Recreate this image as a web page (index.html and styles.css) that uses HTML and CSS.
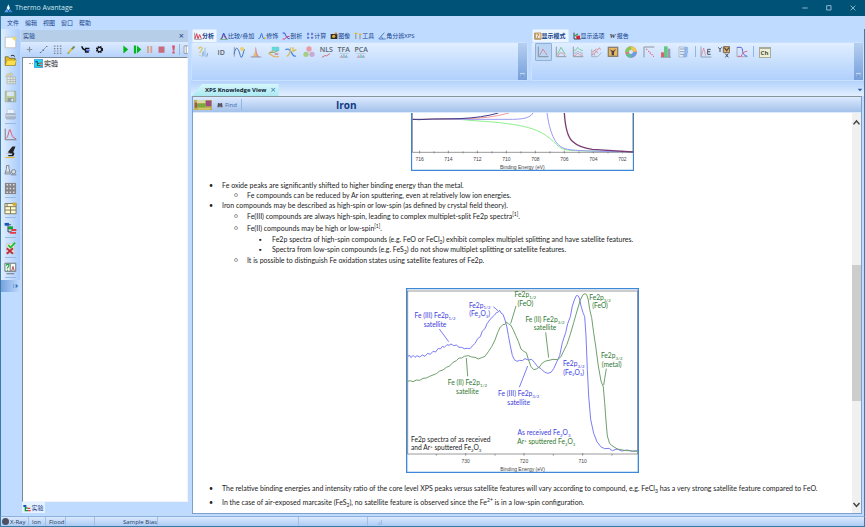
FILE: index.html
```html
<!DOCTYPE html>
<html lang="zh-CN">
<head>
<meta charset="utf-8">
<title>Thermo Avantage</title>
<link rel="stylesheet" href="styles.css">
</head>
<body>
<header class="titlebar">
  <svg class="logo" viewBox="0 0 27 27"><path d="M13 1 18 13 13 19 8 13Z" fill="#e8f6ff"/><path d="M8 14 13 20 11 25H1Z" fill="#5ba6ee"/><path d="M18 14 26 25H13l1-5Z" fill="#3f7fe0"/></svg>
  <span class="app-name">Thermo Avantage</span>
  <div class="window-buttons">
    <button aria-label="Minimize"><svg viewBox="0 0 18 18"><path d="M1 9h16" class="wb"/></svg></button>
    <button aria-label="Maximize"><svg viewBox="0 0 18 18"><path d="M2 2h13v13H2z" class="wb"/></svg></button>
    <button aria-label="Close"><svg viewBox="0 0 18 18"><path d="M2 2l14 14M16 2 2 16" class="wb"/></svg></button>
  </div>
</header>
<nav class="menubar">
  <button>文件</button><button>编辑</button><button>视图</button><button>窗口</button><button>帮助</button>
</nav>
<div class="workspace">
  <aside class="side-tools">
    <button aria-label="New"><svg viewBox="0 0 42 42"><path d="M4 4h34v34H4z" fill="#fff" stroke="#a9a9a4" stroke-width="2"/><circle cx="34" cy="8" r="5" fill="#f4dc5c"/><path d="M34 0v16M26 8h16" stroke="#f2d95a" stroke-width="2"/></svg></button>
    <button aria-label="Open"><svg viewBox="0 0 42 42"><path d="M4 37V9h10l4 5h18v23z" fill="#e8bc1c" stroke="#4b4218" stroke-width="2"/><path d="M4 37l6-17h30l-5 17z" fill="#fbe04e" stroke="#83701c"/><path d="M22 6q8-5 13 2" fill="none" stroke="#222" stroke-width="3"/></svg></button>
    <button aria-label="Export grid"><svg viewBox="0 0 42 42" opacity=".65"><path d="M10 16h27v22H10z" fill="#fffbd0" stroke="#878c78" stroke-width="2"/><path d="M10 24h27M10 31h27M20 16v22M29 16v22" stroke="#878c78" stroke-width="2"/><path d="M5 15Q8 4 21 4V1l9 7-9 7v-5q-8 0-10 5z" fill="#dccd69" stroke="#93916c"/></svg></button>
    <button aria-label="Save"><svg viewBox="0 0 42 42" opacity=".65"><path d="M4 4h34v34H4z" fill="#b4bd5a" stroke="#737b64" stroke-width="2"/><path d="M10 5h22v15H10z" fill="#e4eef3"/><path d="M12 26h19v12H12z" fill="#707a78"/><path d="M24 28h5v8h-5z" fill="#fff"/></svg></button>
    <button aria-label="Print"><svg viewBox="0 0 42 42" opacity=".65"><path d="M12 4h20l3 16H8z" fill="#fff" stroke="#aab3bd" stroke-width="2"/><path d="M4 20l5-4h25l5 4v12l-5 5H9l-5-5z" fill="#9aa2ac"/><path d="M5 25h33" stroke="#e4e8ee" stroke-width="3"/></svg></button>
    <hr>
    <button aria-label="Spectrum"><svg viewBox="0 0 42 42"><path d="M4 2v36h36" fill="none" stroke="#777" stroke-width="3"/><path d="M6 34Q12 32 15 16t5-10 5 16 14 13" fill="none" stroke="#e0556a" stroke-width="3"/></svg></button>
    <button aria-label="Microscope"><svg viewBox="0 0 42 42"><path d="M27 2h10l-7 17 4 6-4 8H14v-4h11l2-5H14v-6z" fill="#222"/><path d="M8 22h11v3H8z" fill="#bbb"/><path d="M4 37h31" stroke="#d9c24c" stroke-width="4"/></svg></button>
    <button aria-label="Sample"><svg viewBox="0 0 42 42"><path d="M8 5h8v10l5 17H3l5-17zM5 26h14" fill="#e5edf4" stroke="#77828d" stroke-width="3"/><circle cx="31" cy="25" r="7" fill="#d4dce3" stroke="#77828d" stroke-width="3"/><path d="M22 35h18" stroke="#77828d" stroke-width="3"/></svg></button>
    <button aria-label="Plate"><svg viewBox="0 0 42 42"><path d="M3 3h36v36H3z" fill="#84848a"/><path d="M8 9h5m5 0h5m6 0h5M8 21h5m5 0h5m6 0h5M8 33h5m5 0h5m6 0h5" stroke="#deded7" stroke-width="5"/></svg></button>
    <hr>
    <button aria-label="Table"><svg viewBox="0 0 42 42"><path d="M3 5h36v33H3z" fill="#fffcc7" stroke="#777462" stroke-width="3"/><path d="M3 15h36M3 26h36M21 15v23M10 5v10" stroke="#777462" stroke-width="3"/><path d="M28 2h12v10H28z" fill="#d2a72d"/></svg></button>
    <hr>
    <button aria-label="Experiment tree"><svg viewBox="0 0 42 42"><path d="M2 3h14v9H2z" fill="#1556c3"/><path d="M16 9h6M13 12v20h12M13 20h9" fill="none" stroke="#333" stroke-width="3"/><path d="M14 14h15v10H14z" fill="#14a43c"/><path d="M24 23h16v6H24zM19 32h20v6H19z" fill="#e63845"/></svg></button>
    <hr>
    <button aria-label="Validate"><svg viewBox="0 0 42 42"><path d="M8 5h25v32H8z" fill="#e7e5d8" stroke="#a8a79d"/><path d="M9 20l20 18M29 20 9 38" stroke="#bb3142" stroke-width="6"/><path d="M14 10l7 8L36 2" fill="none" stroke="#19bf2d" stroke-width="5"/></svg></button>
    <hr>
    <button aria-label="Knowledge"><svg viewBox="0 0 42 42"><path d="M3 4h35v26H3z" fill="#f5fbf5" stroke="#666e75" stroke-width="3"/><path d="M8 38h25M20 5v25" stroke="#666e75" stroke-width="3"/><path d="M8 12q0-5 4-5 6 1 3 7l-4 5v2m0 4v3" fill="none" stroke="#21aa46" stroke-width="4"/><path d="M25 29l4-15 4 15" fill="none" stroke="#b34d58" stroke-width="3"/></svg></button>
    <hr>
    <button class="expand" aria-label="Expand"><svg viewBox="0 0 24 18"><path d="M5 3v12" stroke="#5c8cc9" stroke-width="2"/><path d="M11 2l8 7-8 7z" fill="#3e75c1"/></svg></button>
  </aside>

  <section class="experiment">
    <div class="panel-head"><span>实验</span><button aria-label="Close panel">×</button></div>
    <div class="panel-tools">
      <button aria-label="Point"><svg viewBox="0 0 30 30"><path d="M15 6v18M6 15h18" stroke="#8b929c" stroke-width="4"/></svg></button>
      <button aria-label="Line"><svg viewBox="0 0 30 30"><path d="M4 27 26 4" stroke="#767b84" stroke-width="2"/><path d="M3 25h4m5-8h5m7-12h4" stroke="#686c74" stroke-width="4"/></svg></button>
      <button aria-label="Grid"><svg viewBox="0 0 30 30"><path d="M3 4h5m5 0h5m5 0h5M3 12h5m5 0h5m5 0h5M3 20h5m5 0h5m5 0h5M3 28h5m5 0h5m5 0h5" stroke="#7b8490" stroke-width="4"/></svg></button>
      <button aria-label="Edit"><svg viewBox="0 0 30 30"><path d="M5 26 17 12" stroke="#e0bd3c" stroke-width="6"/><path d="M16 14 25 5" stroke="#718a5a" stroke-width="6"/><path d="M2 28l4-1" stroke="#43a34a" stroke-width="4"/></svg></button>
      <button aria-label="Gun"><svg viewBox="0 0 30 30"><path d="M3 4q1 10 11 13" fill="none" stroke="#111" stroke-width="5"/><path d="M13 9h15v5H17v4h9v8H13z" fill="#151525"/><path d="M18 16h11v5H18z" fill="#506eec"/></svg></button>
      <button aria-label="Settings"><svg viewBox="0 0 30 30"><circle cx="15" cy="15" r="10" fill="none" stroke="#16181b" stroke-width="4" stroke-dasharray="5 3"/><circle cx="15" cy="15" r="7" fill="none" stroke="#16181b" stroke-width="4"/></svg></button>
      <span class="gap"></span>
      <button aria-label="Run"><svg viewBox="0 0 30 30"><path d="M8 2l16 13L8 28z" fill="#05b51d"/></svg></button>
      <button aria-label="Run step"><svg viewBox="0 0 30 30"><path d="M3 2h7v26H3zM13 2l15 13-15 13z" fill="#05b51d"/></svg></button>
      <button aria-label="Pause"><svg viewBox="0 0 30 30"><path d="M7 3h6v24H7zM18 3h6v24h-6z" fill="#d9a287"/></svg></button>
      <button aria-label="Stop"><svg viewBox="0 0 30 30"><path d="M5 5h20v21H5z" fill="#c96b7c"/></svg></button>
      <button aria-label="Abort"><svg viewBox="0 0 30 30"><path d="M10 2h10l-2 17h-5z" fill="#d75769"/><circle cx="15" cy="25" r="4" fill="#d75769"/></svg></button>
      <i class="divider"></i>
      <button class="cut" aria-label="Report"><svg viewBox="0 0 30 30"><path d="M7 3h22v25H7zM14 3v25" fill="#fff" stroke="#68717b" stroke-width="2"/></svg></button>
    </div>
    <div class="tree">
      <div class="tree-item"><i class="twig"></i><svg viewBox="0 0 26 26"><path d="M1 1h24v24H1z" fill="#20d6eb" stroke="#2384dd" stroke-width="2"/><path d="M4 6h7v4H4z" fill="#124cc3"/><path d="M10 8v11h7M10 13h6" fill="none" stroke="#156d46" stroke-width="3"/><path d="M16 10h7v4h-7zM16 18h7v4h-7z" fill="#e34755"/></svg><span>实验</span></div>
    </div>
    <div class="panel-tabs"><button><svg viewBox="0 0 24 24"><path d="M1 3h9v6H1z" fill="#1754c5"/><path d="M7 9v11h8M7 12h7" fill="none" stroke="#17913c" stroke-width="4"/><path d="M14 11h8v4h-8zM15 18h8v4h-8z" fill="#e33d42"/></svg>实验</button></div>
  </section>

  <section class="right">
    <div class="ribbons">
      <div class="ribbon analysis">
        <div class="tabs">
          <button class="active"><svg viewBox="0 0 24 24"><path d="M2 2v20h21" fill="none" stroke="#777" stroke-width="2"/><path d="M3 20 8 5l4 15 5-12 5 12" fill="none" stroke="#e03648" stroke-width="3"/></svg>分析</button>
          <button><svg viewBox="0 0 24 24"><path d="M1 21Q7 21 9 11t4 0 9 10" fill="none" stroke="#e43b3f" stroke-width="3"/><path d="M5 20 11 3l8 17" fill="none" stroke="#335bd8" stroke-width="3"/><path d="M1 23h22" stroke="#2eaa47" stroke-width="2"/></svg>比较/叠加</button>
          <button><svg viewBox="0 0 24 24"><path d="M1 20q7 1 8-12 2-10 4 4 1 9 8 9" fill="none" stroke="#4278dc" stroke-width="3"/><path d="M18 16h5v5h-5z" fill="#e7b936"/></svg>修饰</button>
          <button><svg viewBox="0 0 24 24"><path d="M2 3h6q6 18 15 17" fill="none" stroke="#3549d6" stroke-width="3"/><path d="M2 21h6q7-10 15-8" fill="none" stroke="#df4370" stroke-width="3"/></svg>剖析</button>
          <button><svg viewBox="0 0 24 24"><path d="M3 6h7m5 0h7M3 17h7m5 0h7M6 2v8m12-8v8M6 14v7m12-7v7" stroke="#5267cb" stroke-width="3"/></svg>计算</button>
          <button><svg viewBox="0 0 24 24"><path d="M2 6h20v15H2z" fill="#322b2e"/><circle cx="11" cy="13" r="5" fill="#dfac36"/><path d="M14 2h7v5h-7z" fill="#d67c2e"/></svg>图像</button>
          <button><svg viewBox="0 0 24 24"><path d="M5 3v18M18 7v15" stroke="#9ca4a7" stroke-width="4"/><path d="M2 4h8m5 3h8" stroke="#e4b52e" stroke-width="4"/></svg>工具</button>
          <button><svg viewBox="0 0 24 24"><path d="M2 21 19 2M3 21h20M9 14q5 2 5 7" fill="none" stroke="#547dbd" stroke-width="3"/></svg>角分辨XPS</button>
        </div>
        <div class="ribbon-body">
          <div class="tool-grid ten">
            <button aria-label="Identify"><svg viewBox="0 0 36 36"><path d="M2 9q2-7 8-5 5 4 0 9l-4 5v4m0 5v3" fill="none" stroke="#ddc56e" stroke-width="4"/><path d="M14 31V18m7 13V5m7 27V21m-16 11q5 0 5-16m5 17q6-2 7-12" fill="none" stroke="#78a4d5" stroke-width="2"/></svg></button>
            <button class="word id">ID</button>
            <button aria-label="Peak"><svg viewBox="0 0 36 36"><path d="M4 3v29" stroke="#767b8b" stroke-width="2"/><path d="M3 25Q8 2 13 7t9 22T34 9" fill="none" stroke="#4e79bf" stroke-width="3"/><circle cx="27" cy="9" r="6" fill="#ecd06d"/></svg></button>
            <button aria-label="Fit"><svg viewBox="0 0 36 36"><path d="M3 33q12-2 14-29 4 28 15 29z" fill="#e9a7ae"/><path d="M8 33q5-2 8-20l7 20z" fill="#dfc16e"/><path d="M17 4q1 20 6 29" stroke="#d97583" stroke-width="2" fill="none"/><path d="M2 33h32" stroke="#6b83ba" stroke-width="2"/></svg></button>
            <button aria-label="Link"><svg viewBox="0 0 36 36"><path d="M12 3h21v12H12z" fill="#5edce2" stroke="#7dbca9"/><path d="M16 14 3 23l15 9h15" fill="none" stroke="#e5b36b" stroke-width="4"/><path d="M4 19h15l10-5" stroke="#77a872" stroke-width="3" fill="none"/><path d="M20 24h11" stroke="#cc7585" stroke-width="4"/></svg></button>
            <button aria-label="Smooth"><svg viewBox="0 0 36 36"><path d="M1 11q11-6 18 8t14 11" fill="none" stroke="#4c8ce5" stroke-width="4"/><path d="M5 31Q16 27 17 4m8 12 9-6M24 4v13" fill="none" stroke="#dabe5d" stroke-width="4"/></svg></button>
            <button aria-label="Composition"><svg viewBox="0 0 36 36"><circle cx="18" cy="9" r="8" fill="#ea9ba7"/><circle cx="9" cy="25" r="8" fill="#a8cc85"/><circle cx="27" cy="25" r="8" fill="#c8abd4"/></svg></button>
            <button class="word">NLS<svg viewBox="0 0 30 16"><path d="M2 14 12 8 17 9 28 2" fill="none" stroke="#d16b6e" stroke-width="3"/></svg></button>
            <button class="word">TFA<svg viewBox="0 0 30 16"><path d="M3 14q5-15 8 0" fill="#e394a2"/><path d="M10 14q5-22 9 0" fill="#79d4c7"/><path d="M18 14q5-15 8 0" fill="#99a4df"/><path d="M1 2h28M1 14h28" stroke="#888"/></svg></button>
            <button class="word">PCA<svg viewBox="0 0 30 16"><path d="M3 14q5-15 8 0" fill="#e394a2"/><path d="M10 14q5-22 9 0" fill="#79d4c7"/><path d="M18 14q5-15 8 0" fill="#99a4df"/><path d="M1 2h28M1 14h28" stroke="#888"/></svg></button>
          </div>
          <button class="launcher" aria-label="More"><svg viewBox="0 0 20 20"><path d="M3 4h14" stroke="#e7f2ff" stroke-width="2"/><path d="M3 9h14l-7 8z" fill="#5688ca" stroke="#dcecff"/></svg></button>
        </div>
      </div>
      <div class="ribbon display">
        <div class="tabs">
          <button class="active"><svg viewBox="0 0 24 24"><path d="M2 2v20h20M4 3h17v16H4z" fill="#ffe3a0" stroke="#967038" stroke-width="2"/><path d="M8 8q3-5 6 0 0 3-4 6v3" fill="none" stroke="#7c4f24" stroke-width="2"/></svg>显示模式</button>
          <button><svg viewBox="0 0 24 24"><path d="M3 2v19h20" fill="none" stroke="#444" stroke-width="3"/><path d="M4 13 15 5" stroke="#31a159" stroke-width="4"/><path d="M10 11h11v10H10z" fill="#cb2430"/></svg>显示选项</button>
          <button><b class="w-mark">W</b>报告</button>
        </div>
        <div class="ribbon-body">
          <div class="tool-grid nine">
            <button class="pressed" aria-label="Single"><svg viewBox="0 0 36 36"><path d="M4 2v30h30" fill="none" stroke="#8590a1" stroke-width="3"/><path d="M8 28 18 9l12 19" fill="none" stroke="#d28d9d" stroke-width="3"/></svg></button>
            <button aria-label="Overlay"><svg viewBox="0 0 36 36"><path d="M4 2v30h30" fill="none" stroke="#939ba5" stroke-width="3"/><path d="M7 25 18 4l13 21" fill="none" stroke="#78c69b" stroke-width="3"/><path d="M8 30q10-20 22 0" fill="none" stroke="#dc929f" stroke-width="3"/></svg></button>
            <button aria-label="Stack"><svg viewBox="0 0 36 36"><path d="M4 2v30h30" fill="none" stroke="#939ba5" stroke-width="3"/><path d="M5 14q8 0 12-10 5 9 16 10" fill="none" stroke="#84cda0" stroke-width="3"/><path d="M5 22q8 0 12-7 5 7 16 7" fill="none" stroke="#99a0b4" stroke-width="2"/><path d="M5 29q8 0 12-8 5 8 16 7" fill="none" stroke="#e09aa4" stroke-width="3"/></svg></button>
            <button aria-label="Perspective"><svg viewBox="0 0 36 36"><path d="M5 10v22h18L34 20" fill="none" stroke="#999da4" stroke-width="2"/><path d="M6 28q5-12 8 0m0-6q6-13 8-1m0-8q7-13 9-2M7 18l13-9" fill="none" stroke="#d9878c" stroke-width="3"/></svg></button>
            <button aria-label="Image"><svg viewBox="0 0 36 36"><path d="M2 2h32v31H2z" fill="#8b8170"/><path d="M6 6h24v23H6z" fill="#ecb55f"/><path d="M8 10l10 5 9-7-6 11v9h-7V18z" fill="#454747"/></svg></button>
            <button aria-label="Colour wheel"><svg viewBox="0 0 36 36"><circle cx="18" cy="18" r="12" fill="none" stroke="#e17580" stroke-width="11"/><path d="M6 18A12 12 0 0 1 18 6" fill="none" stroke="#85cb58" stroke-width="11"/><path d="M18 6a12 12 0 0 1 12 11" fill="none" stroke="#ebc850" stroke-width="11"/><path d="M30 18a12 12 0 0 1-12 12" fill="none" stroke="#6b9ce1" stroke-width="11"/><path d="M18 30A12 12 0 0 1 7 23" fill="none" stroke="#65bd96" stroke-width="11"/></svg></button>
            <button aria-label="Scatter"><svg viewBox="0 0 36 36"><path d="M3 34V3h31" fill="none" stroke="#8c949e" stroke-width="3"/><path d="M9 10h4m2 6h4m1 5h4m1 5h4m1 5h3" stroke="#e47786" stroke-width="4"/></svg></button>
            <button aria-label="Bars"><svg viewBox="0 0 36 36"><path d="M3 19h9v14H3z" fill="#e0606f"/><path d="M12 1h11v32H12z" fill="#62ca80"/><path d="M23 8h8v25h-8z" fill="#9b9cb8"/><path d="M2 34h31" stroke="#7a8491" stroke-width="2"/></svg></button>
            <button aria-label="Sheets"><svg viewBox="0 0 36 36"><path d="M3 3h20v30H3z" fill="#e5eefb" stroke="#9ba9bc" stroke-width="2"/><path d="M6 9h14M6 17h14M6 25h14" stroke="#91a2bb" stroke-width="3"/><path d="M20 4h9v8h-9zM20 14h9v8h-9zM16 24h11v8H16z" fill="#94b9ed" stroke="#6194dc"/></svg></button>
          </div>
          <i class="divider"></i>
          <div class="tool-grid three">
            <button aria-label="Energy"><svg viewBox="0 0 36 36"><path d="M3 2v31h31" fill="none" stroke="#777f8b" stroke-width="2"/><path d="M4 29 11 6l6 23" fill="none" stroke="#df7384" stroke-width="2"/><path d="M32 10h-9v15h9M23 17h8" fill="none" stroke="#4d5862" stroke-width="3"/></svg></button>
            <button aria-label="YX image"><svg viewBox="0 0 36 36"><path d="M16 2h19v18H16z" fill="#e8b060" stroke="#70695e" stroke-width="3"/><path d="M19 5l7 9 7-9" fill="none" stroke="#554e47" stroke-width="4"/><path d="M1 4l5 6 5-6M6 10v8m16 5 9 11m0-11-9 11" fill="none" stroke="#474b51" stroke-width="3"/></svg></button>
            <button aria-label="Profile"><svg viewBox="0 0 36 36"><path d="M3 3v29h31" fill="none" stroke="#8b91a0" stroke-width="2"/><path d="M3 4h12q5 1 5 12t14 15" fill="none" stroke="#5667d9" stroke-width="3"/><path d="M5 31h11q3-15 18-15" fill="none" stroke="#e26b87" stroke-width="3"/></svg></button>
          </div>
          <i class="divider"></i>
          <button class="chem">Ch</button>
          <button class="launcher" aria-label="More"><svg viewBox="0 0 20 20"><path d="M3 4h14" stroke="#e7f2ff" stroke-width="2"/><path d="M3 9h14l-7 8z" fill="#5688ca" stroke="#dcecff"/></svg></button>
        </div>
      </div>
    </div>

    <div class="doc-tabs">
      <button class="doc-tab"><b>XPS Knowledge View</b><span>×</span></button>
      <button class="doc-menu" aria-label="Documents"><svg viewBox="0 0 18 12"><path d="M2 2h14l-7 8z" fill="#2763aa"/></svg></button>
    </div>
    <div class="doc">
      <div class="doc-bar">
        <button class="map" aria-label="Periodic table"><svg viewBox="0 0 54 30"><path d="M0 0h54v30H0z" fill="#bcae55"/><path d="M2 8h7v15H2z" fill="#a35855"/><path d="M9 11h25v11H9z" fill="#77aa3d"/><path d="M35 2h17v17H35z" fill="#974d81"/><path d="M9 0h25v9H9z" fill="#d8d9aa"/><path d="M12 25h36v3H12z" fill="#ded573"/></svg></button>
        <button class="find"><svg viewBox="0 0 18 18"><path d="M3 3h4l2 4 2-4h4l2 13h-7v-5H8v5H1z" fill="#54545a"/></svg>Find</button>
        <i class="divider"></i>
        <h1>Iron</h1>
      </div>
      <div class="doc-view">
        <article class="page">
          <svg class="chart-top" viewBox="36 9 669 174">
            <path d="M37.500 9V181.500H703.500V9" fill="#fff" stroke="#3d89d8" stroke-width="4"/>
            <path d="M40 127H702M62 122v8M105 124v6M148 122v8M192 124v6M235 122v8M279 124v6M322 122v8M366 124v6M409 122v8M453 124v6M496 122v8M540 124v6M583 122v8M627 124v6M670 122v8M40 9v118M702 9v118" class="axis"/>
            <path d="M40 28 180 28C230 34 290 34 340 43C390 50 420 62 440 76C458 88 470 102 482 112Q496 122 530 122L702 126" class="line lime"/>
            <path d="M40 28 340 28Q375 28 390 20 398 16 402 9M444 9C450 50 458 75 470 95Q484 114 505 118 540 124 702 126" class="line violet"/>
            <path d="M40 28 190 26Q270 26 330 9" class="line coral"/>
            <path d="M40 28 60 29 100 27 180 26Q250 23 298 9" class="line navy"/>
            <path d="M496 9Q500 75 520 94 540 113 580 118L702 126" class="line purple"/>
            <g class="tick"><text x="62" y="152">716</text><text x="148" y="152">714</text><text x="235" y="152">712</text><text x="322" y="152">710</text><text x="409" y="152">708</text><text x="496" y="152">706</text><text x="583" y="152">704</text><text x="670" y="152">702</text><text x="370" y="177">Binding Energy (eV)</text></g>
          </svg>
          <ul class="notes">
            <li>Fe oxide peaks are significantly shifted to higher binding energy than the metal.
              <ul><li>Fe compounds can be reduced by Ar ion sputtering, even at relatively low ion energies.</li></ul></li>
            <li>Iron compounds may be described as high-spin or low-spin (as defined by crystal field theory).
              <ul>
                <li class="roomy">Fe(III) compounds are always high-spin, leading to complex multiplet-split Fe2p spectra<sup>[1]</sup>.</li>
                <li class="roomy">Fe(II) compounds may be high or low-spin<sup>[1]</sup>.
                  <ul><li>Fe2p spectra of high-spin compounds (e.g. FeO or FeCl<sub>2</sub>) exhibit complex multiplet splitting and have satellite features.</li><li>Spectra from low-spin compounds (e.g. FeS<sub>2</sub>) do not show multiplet splitting or satellite features.</li></ul></li>
                <li class="roomy">It is possible to distinguish Fe oxidation states using satellite features of Fe2p.</li>
              </ul></li>
          </ul>
          <svg class="chart-main" viewBox="21 26 699 555">
            <path d="M23 28H718V579H23Z" fill="#fff" stroke="#3d89d8" stroke-width="4"/>
            <path d="M26 35H716V524H26ZM112 524v5M200 521v8M288 524v5M375 521v8M463 524v5M551 521v8M639 524v5" class="axis"/>
            <path d="M26 233 31 227 36 235 42 228 48 234 54 229 62 233 70 227 78 231 86 222 94 225 102 216 110 218 118 207 124 209 130 201 136 204 144 196 150 198 156 194 164 199 172 197 180 204 188 204 196 208 205 207 213 208 220 200 228 192 236 178 244 172 250 155 258 148 264 133 272 122 280 113 286 108 292 100 298 98 302 93 306 101 312 105 318 122 323 140 328 168 334 200 340 228 346 241 354 246 362 243 370 244 378 238 388 242 398 240 406 249 416 262 426 268 436 278 446 282 456 279 464 268 474 246 482 229 490 190 500 160 506 133 514 112 520 80 526 62 532 49 536 48 541 56 546 80 552 100 557 112 561 170 565 270 569 350 575 420 584 462 594 487 605 502 617 508 630 507 640 514 655 509 668 515 685 512 700 516 716 514" class="line blue"/>
            <path d="M26 306 34 304 42 307 52 302 62 303 72 297 82 296 92 291 102 287 112 283 122 275 132 272 142 264 152 260 162 249 172 244 180 236 188 236 196 231 208 229 218 233 228 234 238 239 248 235 258 231 268 217 278 202 288 182 296 160 304 143 312 136 318 135 322 128 328 133 335 137 342 150 350 168 358 186 366 209 374 216 382 220 388 240 396 262 404 271 412 269 420 264 430 251 440 245 450 243 462 240 476 241 486 232 494 215 504 195 514 165 524 130 534 95 544 62 552 46 558 43 563 46 568 62 572 90 578 115 584 160 590 200 598 260 606 305 613 323 617 370 621 425 625 470 632 493 642 501 655 509 675 513 716 516" class="line green"/>
            <path d="M121 149l28 38M283 82l15 13M361 324l25-64" class="line blue"/>
            <path d="M202 236l4 55M351 80 335 133M440 159l9 76M622 268l-8 49" class="line green"/>
            <g class="label blue-text">
              <text x="108" y="117">Fe (III) Fe2p<tspan class="small" dy="5">1/2</tspan></text><text x="108" y="142">satellite</text>
              <text x="242" y="85">Fe2p<tspan class="small" dy="5">1/2</tspan></text><text x="242" y="110">(Fe<tspan class="small" dy="5">2</tspan><tspan dy="-5">O</tspan><tspan class="small" dy="5">3</tspan><tspan dy="-5">)</tspan></text>
              <text x="359" y="350">Fe (III) Fe2p<tspan class="small" dy="5">3/2</tspan></text><text x="359" y="376">satellite</text>
              <text x="524" y="260">Fe2p<tspan class="small" dy="5">3/2</tspan></text><text x="524" y="286">(Fe<tspan class="small" dy="5">2</tspan><tspan dy="-5">O</tspan><tspan class="small" dy="5">3</tspan><tspan dy="-5">)</tspan></text>
              <text x="435" y="467">As received Fe<tspan class="small" dy="5">2</tspan><tspan dy="-5">O</tspan><tspan class="small" dy="5">3</tspan></text>
            </g>
            <g class="label green-text">
              <text x="379" y="54">Fe2p<tspan class="small" dy="5">1/2</tspan></text><text x="379" y="79">(FeO)</text>
              <text x="438" y="128">Fe (II) Fe2p<tspan class="small" dy="5">3/2</tspan></text><text x="438" y="153">satellite</text>
              <text x="603" y="62">Fe2p<tspan class="small" dy="5">3/2</tspan></text><text x="603" y="87">(FeO)</text>
              <text x="638" y="237">Fe2p<tspan class="small" dy="5">3/2</tspan></text><text x="638" y="262">(metal)</text>
              <text x="205" y="318">Fe (II) Fe2p<tspan class="small" dy="5">1/2</tspan></text><text x="205" y="343">satellite</text>
              <text x="442" y="494">Ar<tspan class="small" dy="-6">+</tspan><tspan dy="6"> sputtered Fe</tspan><tspan class="small" dy="5">2</tspan><tspan dy="-5">O</tspan><tspan class="small" dy="5">3</tspan></text>
            </g>
            <g class="caption"><text x="36" y="487">Fe2p spectra of as received</text><text x="36" y="512">and Ar<tspan class="small" dy="-6">+</tspan><tspan dy="6"> sputtered Fe</tspan><tspan class="small" dy="5">2</tspan><tspan dy="-5">O</tspan><tspan class="small" dy="5">3</tspan></text></g>
            <g class="tick"><text x="200" y="550">730</text><text x="375" y="550">720</text><text x="551" y="550">710</text><text x="371" y="575">Binding Energy (eV)</text></g>
          </svg>
          <ul class="notes remarks">
            <li>The relative binding energies and intensity ratio of the core level XPS peaks <em>versus</em> satellite features will vary according to compound, e.g. FeCl<sub>3</sub> has a very strong satellite feature compared to FeO.</li>
            <li>In the case of air-exposed marcasite (FeS<sub>2</sub>), no satellite feature is observed since the Fe<sup>2+</sup> is in a low-spin configuration.</li>
          </ul>
        </article>
        <div class="scrollbar">
          <button aria-label="Scroll up"><svg viewBox="0 0 24 24"><path d="M4 17l8-9 8 9" class="arrow"/></svg></button>
          <div class="before"></div><div class="thumb"></div><div class="after"></div>
          <button aria-label="Scroll down"><svg viewBox="0 0 24 24"><path d="M4 8l8 9 8-9" class="arrow"/></svg></button>
        </div>
      </div>
    </div>
  </section>
</div>
<footer class="status">
  <span class="xray"><i class="lamp"></i>X-Ray</span><span class="ion">Ion</span><span class="flood">Flood</span><span class="blank"></span><span class="bias">Sample Bias</span><span class="wide"></span><span class="mid"></span>
  <svg class="grip" viewBox="0 0 18 18"><path d="M3 15h2m3 0h2m3 0h2M8 10h2m3 0h2M13 5h2" stroke="#7796c0" stroke-width="3"/></svg>
</footer>
</body>
</html>
```
FILE: styles.css
```css
* { box-sizing: border-box; }
html, body { height: 100%; margin: 0; }
body {
  display: flex;
  flex-direction: column;
  overflow: hidden;
  background: #bfdbff;
  color: #15428b;
  font: 6px/8px "Open Sans", "Noto Sans CJK SC", sans-serif;
}
button {
  display: flex;
  align-items: center;
  justify-content: center;
  margin: 0;
  padding: 0;
  border: 0;
  background: none;
  color: inherit;
  font: inherit;
  white-space: nowrap;
}
svg { display: block; flex: none; }

.titlebar { display: flex; align-items: center; flex: none; height: 16px; padding-left: 4px; background: #005277; color: #d5e8f1; font-size: 7px; }
.logo { width: 9px; height: 9px; margin-right: 2px; }
.window-buttons { display: flex; margin-left: auto; }
.window-buttons button { width: 24px; height: 16px; }
.window-buttons svg { width: 6px; height: 6px; }
.wb { fill: none; stroke: #d5e8f1; stroke-width: 2; }

.menubar { display: flex; align-items: center; gap: 6px; flex: none; height: 13px; padding-left: 6px; border-left: 1px solid #3a7ca8; }

.workspace { display: flex; flex: 1; min-height: 0; border-left: 1px solid #3a7ca8; border-right: 1px solid #3a7ca8; }
.side-tools { flex: none; width: 19px; padding-top: 4px; background: linear-gradient(90deg, #e1eeff, #a9cbfa); border-radius: 0 3px 0 0; align-self: flex-start; }
.side-tools button { width: 18px; height: 18px; }
.side-tools svg { width: 13px; height: 13px; }
.side-tools hr { width: 11px; height: 1px; margin: 0 auto 1px 4px; border: 0; background: #96b9e6; }
.side-tools .expand { justify-content: flex-end; width: 19px; height: 12px; margin-top: 2px; background: linear-gradient(90deg, #75a2de, #c0dafc); }
.side-tools .expand svg { width: 8px; height: 6px; }

.experiment { display: flex; flex-direction: column; flex: 0 0 167px; min-width: 0; margin-left: 1px; }
.panel-head { display: flex; align-items: center; justify-content: space-between; height: 12px; margin-top: 1px; padding: 0 4px 0 2px; background: #b7cee9; }
.panel-head button { font-size: 9px; }
.panel-tools { display: flex; align-items: center; height: 15px; overflow: hidden; padding-left: 1px; background: linear-gradient(#dceaff, #b6d3fb); }
.panel-tools button { flex: none; width: 14px; height: 14px; }
.panel-tools .gap ~ button { width: 12px; }
.panel-tools svg { width: 9px; height: 9px; }
.panel-tools .cut { flex: 0 1 8px; justify-content: flex-start; margin-left: 2px; overflow: hidden; }
.gap { flex: none; width: 13px; }
.divider { flex: none; width: 1px; height: 11px; background: #93b7e5; }
.tree { flex: 1; min-height: 0; margin-left: 1px; padding: 1px 0 0 6px; border: 1px solid; border-color: #798693 #f0f5fb #f0f5fb #798693; background: #fff; color: #222; font-size: 7px; }
.tree-item { display: flex; align-items: center; gap: 1px; height: 9px; }
.tree-item svg { width: 9px; height: 9px; }
.tree-item span { background: #f0f0f0; }
.twig { width: 4px; border-top: 1px dotted #aaa; }
.panel-tabs { display: flex; flex: none; height: 14px; align-items: flex-start; }
.panel-tabs button { width: 23px; height: 11px; margin-left: 1px; background: #e6f1ff; }
.panel-tabs svg { width: 8px; height: 8px; }

.right { display: flex; flex-direction: column; flex: 1; min-width: 0; margin-left: 3px; }
.ribbons { display: flex; gap: 3px; flex: none; }
.ribbon { min-width: 0; }
.analysis { flex: 336; }
.display { flex: 333; }
.tabs { display: flex; height: 13px; gap: 2px; padding-left: 1px; }
.tabs button { height: 13px; padding: 0 1px; }
.tabs svg { width: 8px; height: 8px; }
.tabs .active { padding: 0 2px 0 1px; border: 1px solid #d9eaff; border-bottom: 0; border-radius: 2px 2px 0 0; background: #edf5ff; font-weight: bold; }
.display .tabs { gap: 3px; }
.w-mark { margin-right: 1px; font: italic bold 7px/8px "Liberation Serif", serif; color: #333; }
.ribbon-body { display: flex; align-items: flex-start; height: 39px; border: 1px solid #c9e0ff; border-radius: 2px; background: linear-gradient(#e0eeff, #b0d0fc); padding-left: 3px; }
.tool-grid { display: grid; height: 18px; align-items: center; }
.ten { grid-template-columns: repeat(10, 1fr); width: 175px; }
.nine { grid-template-columns: repeat(9, 1fr); width: 158px; }
.three { grid-template-columns: repeat(3, 1fr); width: 53px; }
.tool-grid svg { width: 12px; height: 12px; }
.tool-grid button { height: 18px; }
.tool-grid .pressed { border: 1px solid #91b0d8; border-radius: 1px; background: #bbd5f5; }
.tool-grid .word { flex-direction: column; color: #59636e; font-size: 7px; font-weight: 600; line-height: 7px; }
.tool-grid .word svg { width: 10px; height: 5px; }
.ribbon-body > .divider { margin: 3px 2px 0 2px; }
.chem { width: 12px; height: 11px; margin: 4px 0 0 3px; border: 1px solid #aaa99d; border-top-width: 2px; background: #eeeed0; color: #454a46; font-weight: bold; }
.launcher { align-items: flex-end; align-self: stretch; width: 9px; margin-left: auto; padding-bottom: 1px; background: linear-gradient(#b5cff1, #769fda); }
.launcher svg { width: 7px; height: 7px; }

.doc-tabs { display: flex; flex: none; align-items: flex-end; height: 15px; padding-left: 1px; background: linear-gradient(#b3d2fb, #e2efff); }
.doc-tab { gap: 4px; height: 12px; padding: 0 3px 0 13px; background: linear-gradient(#d5f7fa, #ace9f2); clip-path: polygon(10px 0, 100% 0, 100% 100%, 0 100%); color: #102334; }
.doc-tab span { color: #397ca2; font-size: 9px; }
.doc-menu { width: 8px; height: 13px; margin-left: auto; }
.doc-menu svg { width: 6px; height: 4px; }
.doc { display: flex; flex-direction: column; flex: 1; min-height: 0; margin: 0 2px 2px 1px; border: 1px solid #7e9fc7; border-top: 1px solid #88949d; }
.doc-bar { display: flex; align-items: center; flex: none; height: 16px; border-bottom: 1px solid #dceaff; background: linear-gradient(#dceaff, #a3c1ea); }
.map { width: 20px; }
.map svg { width: 18px; height: 10px; }
.find { gap: 2px; margin: 0 4px 0 4px; color: #426ba8; }
.find svg { width: 6px; height: 6px; }
.doc-bar h1 { margin: 0 0 0 94px; color: #103b83; font-size: 10px; line-height: 12px; }
.doc-view { display: flex; flex: 1; min-height: 0; background: #fff; }
.page { flex: 1; min-width: 0; overflow: hidden; color: #222; font: 7px/10px Lato, "Open Sans", sans-serif; }
.chart-top { width: 223px; height: 58px; margin: 0 auto; }
.chart-main { width: 233px; height: 185px; margin: 22px auto 8px; }
.notes, .notes ul { margin: 0; padding: 0; list-style: none; }
.notes { padding: 9px 0 0 29px; }
.notes li::before { float: left; width: 13px; margin-left: -13px; content: "•"; }
.notes ul { padding-left: 25px; }
.notes ul li::before { content: "○"; font-size: 6px; }
.notes ul ul li::before { content: "▪"; font-size: 7px; }
.notes .roomy { line-height: 12px; }
.notes .roomy ul { line-height: 10px; }
.remarks { padding-top: 0; line-height: 14px; }
sup, sub { font-size: 5px; line-height: 0; }
.axis { fill: none; stroke: #666; stroke-width: 2; }
.line { fill: none; stroke-width: 3; stroke-linejoin: round; }
.lime { stroke: #8df08d; }
.violet { stroke: #9a9af5; }
.coral { stroke: #f79a9a; }
.navy { stroke: #3c3c8c; }
.purple { stroke: #7a3c74; stroke-width: 4; }
.blue { stroke: #7c7cf5; }
.green { stroke: #6fa06f; }
.tick { fill: #444; font: 15px "Liberation Sans", sans-serif; text-anchor: middle; }
.label, .caption { font: 20px Lato, sans-serif; }
.label { text-anchor: middle; }
.small { font-size: 13px; }
.blue-text { fill: #3c3ce0; }
.green-text { fill: #2e782e; }
.caption { fill: #222; }
.scrollbar { display: flex; flex-direction: column; flex: none; width: 9px; background: #f0f0f0; }
.scrollbar button { height: 18px; }
.scrollbar svg { width: 9px; height: 9px; }
.arrow { fill: none; stroke: #444; stroke-width: 4; }
.before { flex: 134; }
.thumb { flex: 136; background: #cdcdcd; }
.after { flex: 94; }

.status { display: flex; align-items: center; flex: none; height: 11px; padding-left: 1px; border: 1px solid #3a7ca8; border-top-color: #8cb1df; background: linear-gradient(#dbe9fd, #accbf4); color: #263e62; }
.status span { display: flex; align-items: center; height: 9px; padding-left: 3px; border-right: 1px solid #a1c0e8; }
.status .xray { width: 27px; padding-left: 0; gap: 1px; }
.lamp { flex: none; width: 7px; height: 7px; border-radius: 50%; background: #4e5264; }
.ion { width: 17px; }
.flood { width: 20px; }
.blank { width: 29px; }
.status .bias { width: 63px; padding-left: 28px; white-space: nowrap; }
.wide { width: 141px; }
.mid { width: 69px; }
.grip { width: 6px; height: 6px; margin-left: 9px; }
```
